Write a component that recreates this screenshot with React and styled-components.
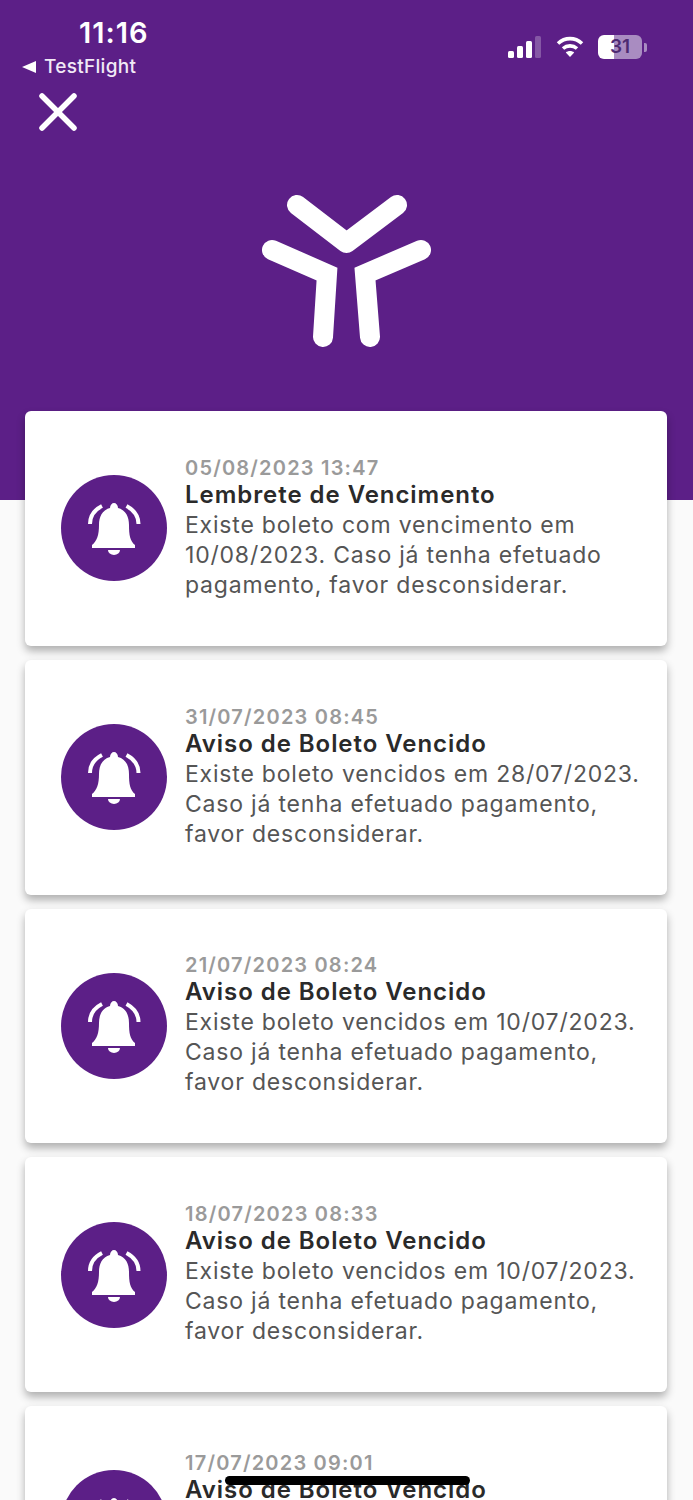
import React from "react";
import styled, { createGlobalStyle } from "styled-components";

const Global = createGlobalStyle`
  html, body { margin: 0; padding: 0; background: #fafafa; }
  * { box-sizing: border-box; }
`;

const Screen = styled.div`
  position: relative;
  width: 693px;
  height: 1500px;
  overflow: hidden;
  background: #fafafa;
  font-family: Inter, "Liberation Sans", sans-serif;
`;

const Header = styled.header`
  height: 500px;
  background: #5c1f87;
  color: #fff;
  padding-top: 17px;
`;

const StatusBar = styled.div`
  display: flex;
  justify-content: space-between;
  align-items: flex-start;
  height: 62px;
  padding: 0 46px 0 22px;
`;

const TimeBlock = styled.div`
  display: flex;
  flex-direction: column;
`;

const Time = styled.div`
  margin-left: 57px;
  font-size: 29px;
  line-height: 32px;
  font-weight: 600;
  letter-spacing: 1px;
`;

const BackLink = styled.div`
  display: flex;
  align-items: center;
  gap: 8px;
  margin-top: 6px;
  font-size: 19px;
  line-height: 24px;
  font-weight: 500;
  letter-spacing: 0.3px;
  color: #f1e9f6;
`;

const BackArrow = styled.span`
  width: 0;
  height: 0;
  border-style: solid;
  border-width: 6.5px 14px 6.5px 0;
  border-color: transparent #fff transparent transparent;
`;

const StatusIcons = styled.div`
  display: flex;
  align-items: center;
  gap: 14px;
  margin-top: 18px;
`;

const Close = styled.button`
  display: block;
  margin: 13px 0 0 37px;
  padding: 0;
  width: 43px;
  height: 42px;
  border: 0;
  background: none;
`;

const LogoWrap = styled.div`
  display: flex;
  justify-content: center;
  margin-top: 59px;
`;

const List = styled.main`
  display: flex;
  flex-direction: column;
  gap: 14px;
  margin-top: -89px;
  padding: 0 26px 0 25px;
`;

const Card = styled.article`
  flex: none;
  display: flex;
  align-items: center;
  gap: 18px;
  height: 234.75px;
  padding: 0 10px 0 36px;
  background: #fff;
  border-radius: 6px;
  box-shadow: 0 5px 9px rgba(0, 0, 0, 0.3);
`;

const Badge = styled.div`
  flex: none;
  width: 106px;
  height: 106px;
  border-radius: 50%;
  background: #5c1f87;
`;

const Content = styled.div`
  display: flex;
  flex-direction: column;
  margin-top: -1px;
`;

const DateText = styled.div`
  font-size: 20px;
  line-height: 24px;
  font-weight: 600;
  letter-spacing: 1.2px;
  color: #9a9a9a;
`;

const Title = styled.h2`
  margin: 0;
  font-size: 24px;
  line-height: 30px;
  font-weight: 600;
  letter-spacing: 0.95px;
  color: #2a2a2a;
`;

const Body = styled.p`
  margin: 0;
  font-size: 23px;
  line-height: 30px;
  font-weight: 400;
  letter-spacing: 0.8px;
  color: #555;
  white-space: pre-line;
`;

const HomeBar = styled.div`
  position: absolute;
  left: 225px;
  top: 1476px;
  width: 245px;
  height: 9px;
  border-radius: 5px;
  background: #000;
`;

const BellIcon = () => (
  <svg width="106" height="106" viewBox="0 0 106 106" fill="none">
    <path
      d="M53 28c-2 0-4 2-4 5C41 35 38 42 38 50c0 10-2 16-7 20v3h43v-3c-5-4-6-10-6-20 0-8-3-15-11-17 0-3-2-5-4-5z"
      fill="#fff"
    />
    <path d="M47 75h12a6 5 0 0 1-12 0z" fill="#fff" />
    <path d="M29 49C29 41 33 35 41 31" stroke="#fff" strokeWidth="4" strokeLinecap="butt" />
    <path d="M77.5 49C77.5 41 73 35 65.5 31" stroke="#fff" strokeWidth="4" strokeLinecap="butt" />
  </svg>
);

const Logo = () => (
  <svg width="170" height="155" viewBox="0 0 170 155" fill="none" stroke="#fff" strokeWidth="20" strokeLinecap="round" strokeLinejoin="miter">
    <path d="M35 12 84.5 50 135 12" strokeLinejoin="round" />
    <path d="M10 57 65 81 61 144" />
    <path d="M159 57 103 81 108 144" />
  </svg>
);

const Signal = () => (
  <svg width="34" height="24" viewBox="0 0 34 24">
    <rect x="0" y="16" width="6" height="7" rx="1.5" fill="#fff" />
    <rect x="9" y="11" width="6" height="12" rx="1.5" fill="#fff" />
    <rect x="18" y="6" width="6" height="17" rx="1.5" fill="#fff" />
    <rect x="27" y="1" width="6" height="22" rx="1.5" fill="#fff" opacity="0.25" />
  </svg>
);

const Wifi = () => (
  <svg width="28" height="24" viewBox="0 0 28 24" fill="none" stroke="#fff" strokeWidth="3.6">
    <path d="M2 8.5C9 2 19 2 26 8.5" />
    <path d="M7 13.5C11 10 17 10 21 13.5" />
    <path d="M14 22 9.8 17.6C12 15.6 16 15.6 18.2 17.6z" fill="#fff" stroke="none" />
  </svg>
);

const BatteryBody = styled.div`
  position: relative;
  width: 44px;
  height: 24px;
  border-radius: 6px;
  overflow: hidden;
  background: linear-gradient(to right, #fff 0 36%, #a98cc1 36% 100%);
  font-size: 19px;
  font-weight: 600;
  line-height: 24px;
  text-align: center;
  color: #4e2a72;
`;

const BatteryCap = styled.span`
  width: 3px;
  height: 9px;
  margin-left: 2px;
  border-radius: 0 2px 2px 0;
  background: #a98cc1;
`;

const Battery = styled.div`
  display: flex;
  align-items: center;
`;

const notices = [
  ["05/08/2023 13:47", "Lembrete de Vencimento", "Existe boleto com vencimento em\n10/08/2023. Caso já tenha efetuado\npagamento, favor desconsiderar."],
  ["31/07/2023 08:45", "Aviso de Boleto Vencido", "Existe boleto vencidos em 28/07/2023.\nCaso já tenha efetuado pagamento,\nfavor desconsiderar."],
  ["21/07/2023 08:24", "Aviso de Boleto Vencido", "Existe boleto vencidos em 10/07/2023.\nCaso já tenha efetuado pagamento,\nfavor desconsiderar."],
  ["18/07/2023 08:33", "Aviso de Boleto Vencido", "Existe boleto vencidos em 10/07/2023.\nCaso já tenha efetuado pagamento,\nfavor desconsiderar."],
  ["17/07/2023 09:01", "Aviso de Boleto Vencido", "Existe boleto vencidos em 10/07/2023.\nCaso já tenha efetuado pagamento,\nfavor desconsiderar."],
];

export default function App() {
  return (
    <Screen>
      <Global />
      <Header>
        <StatusBar>
          <TimeBlock>
            <Time>11:16</Time>
            <BackLink>
              <BackArrow />
              TestFlight
            </BackLink>
          </TimeBlock>
          <StatusIcons>
            <Signal />
            <Wifi />
            <Battery>
              <BatteryBody>31</BatteryBody>
              <BatteryCap />
            </Battery>
          </StatusIcons>
        </StatusBar>
        <Close aria-label="Fechar">
          <svg width="43" height="42" viewBox="0 0 43 42" fill="none" stroke="#fff" strokeWidth="5.5" strokeLinecap="round">
            <path d="M5 4 37 36" />
            <path d="M37 4 5 36" />
          </svg>
        </Close>
        <LogoWrap>
          <Logo />
        </LogoWrap>
      </Header>
      <List>
        {notices.map(([date, title, body]) => (
          <Card key={date}>
            <Badge>
              <BellIcon />
            </Badge>
            <Content>
              <DateText>{date}</DateText>
              <Title>{title}</Title>
              <Body>{body}</Body>
            </Content>
          </Card>
        ))}
      </List>
      <HomeBar />
    </Screen>
  );
}
